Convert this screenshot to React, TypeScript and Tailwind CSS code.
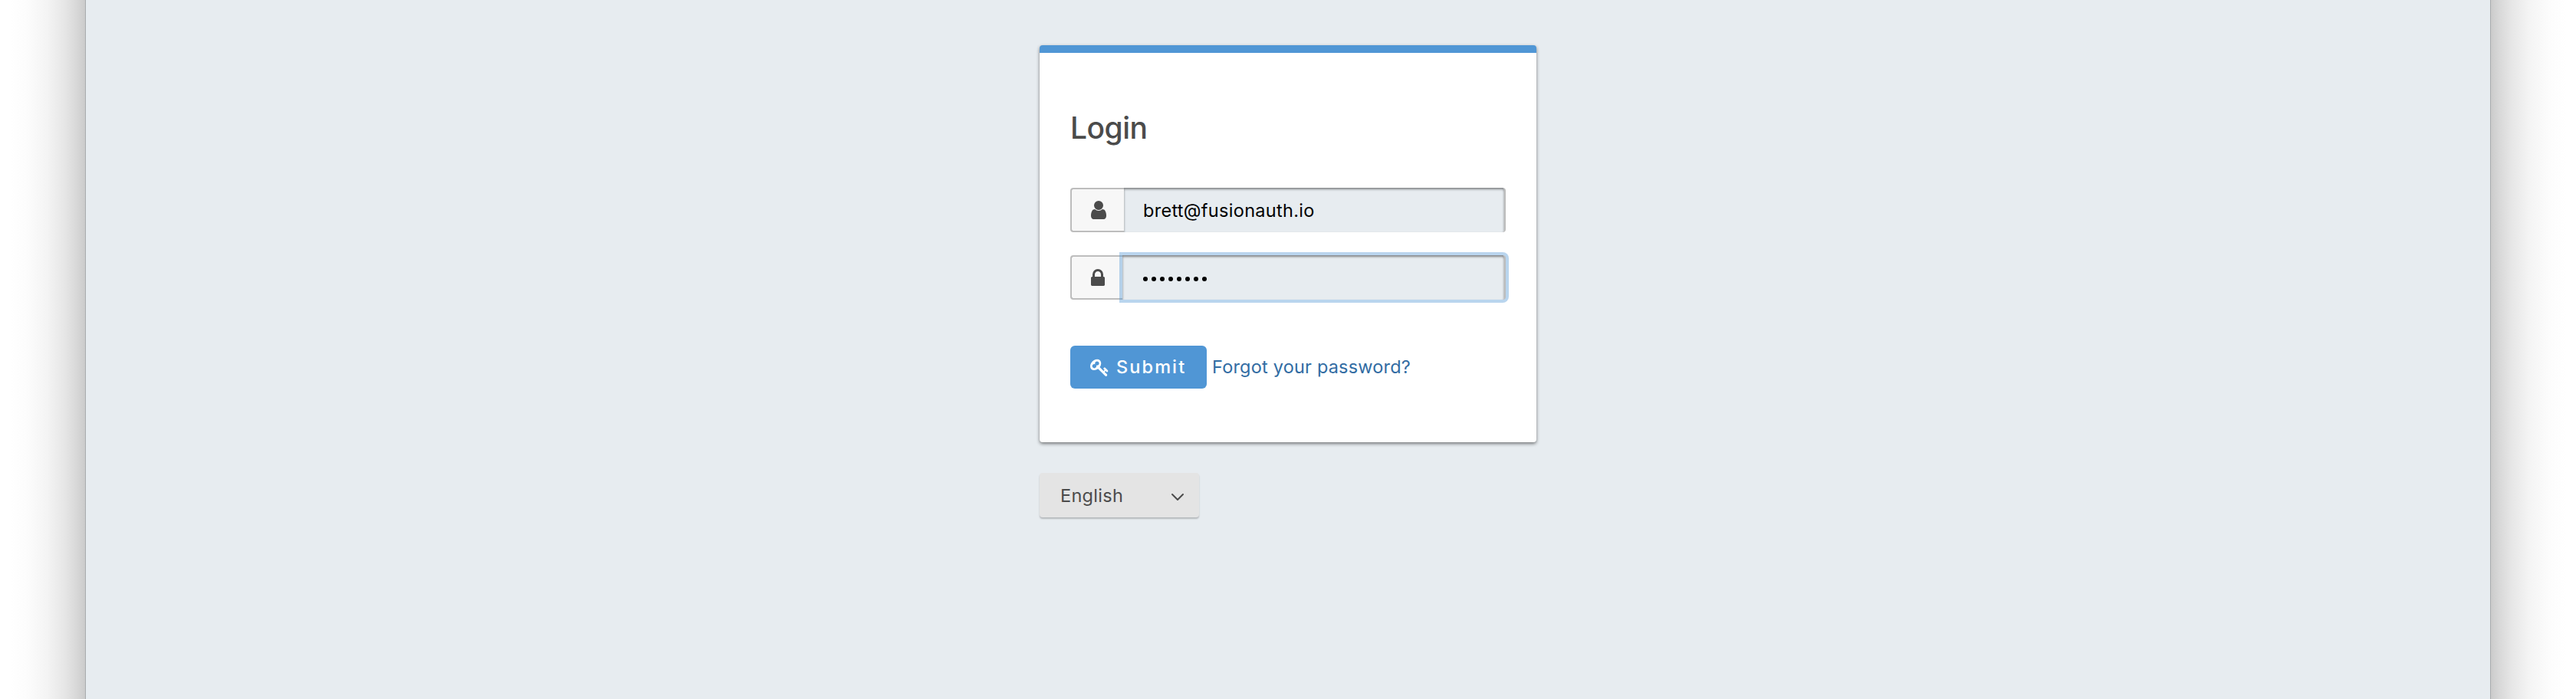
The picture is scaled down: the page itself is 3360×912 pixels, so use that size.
import type { ReactNode } from "react";

function UserIcon() {
  return (
    <svg viewBox="256 128 1280 1536" className="h-6 w-5 fill-current">
      <path d="M1536 1399q0 109-62.5 187t-150.5 78h-854q-88 0-150.5-78t-62.5-187q0-85 8.5-160.5t31.5-152 58.5-131 94-89 134.5-34.5q131 128 313 128t313-128q76 0 134.5 34.5t94 89 58.5 131 31.5 152 8.5 160.5zm-256-887q0 159-112.5 271.5t-271.5 112.5-271.5-112.5-112.5-271.5 112.5-271.5 271.5-112.5 271.5 112.5 112.5 271.5z" />
    </svg>
  );
}

function LockIcon() {
  return (
    <svg viewBox="320 128 1152 1408" className="h-[22px] w-[18px] fill-current">
      <path d="M640 768h512v-192q0-106-75-181t-181-75-181 75-75 181v192zm832 96v576q0 40-28 68t-68 28h-960q-40 0-68-28t-28-68v-576q0-40 28-68t68-28h32v-192q0-184 132-316t316-132 316 132 132 316v192h32q40 0 68 28t28 68z" />
    </svg>
  );
}

function KeyIcon() {
  return (
    <svg viewBox="0 0 1792 1792" className="size-[25px] shrink-0 fill-current">
      <path d="M832 512q0-80-56-136t-136-56-136 56-56 136q0 42 19 83-41-19-83-19-80 0-136 56t-56 136 56 136 136 56 136-56 56-136q0-42-19-83 41 19 83 19 80 0 136-56t56-136zm851 704q0 17-49 66t-66 49q-9 0-28.5-16t-36.5-33-38.5-40-24.5-26l-96 96 220 220q28 28 28 68 0 42-39 81t-81 39q-40 0-68-28l-671-671q-176 131-365 131-163 0-265.5-102.5t-102.5-265.5q0-160 95-313t248-248 313-95q163 0 265.5 102.5t102.5 265.5q0 189-131 365l355 355 96-96q-3-3-26-24.5t-40-38.5-33-36.5-16-28.5q0-17 49-66t66-49q13 0 23 10 6 6 46 44.5t82 79.5 86.5 86 73 78 28.5 41z" />
    </svg>
  );
}

function Addon({ children, className }: { children: ReactNode; className: string }) {
  return (
    <div
      className={`flex h-full shrink-0 items-center rounded-l-[4px] border-2 border-r-0 border-[#bdbdbd] bg-[#f7f7f7] pl-[25px] text-[#4b4b4b] ${className}`}
    >
      {children}
    </div>
  );
}

export default function App() {
  return (
    <div className="flex h-[912px] w-[3360px] overflow-hidden bg-white font-['Inter',sans-serif] text-[23.5px] leading-7">
      <div className="w-[111px] bg-[linear-gradient(to_right,#ffffff_12%,#fcfcfc_32%,#f4f4f4_55%,#e6e6e6_76%,#d8d8d8_90%,#cbcbcb_100%)]" />
      <main className="flex flex-1 flex-col items-center border-x border-[#a8abad] bg-[#e7ecf0] pt-[59px]">
        <div className="flex w-[648px] flex-col items-start">
          <section className="h-[518px] w-full rounded-[4px] border-t-[10px] border-[#5096d5] bg-white px-10 pt-[74px] shadow-[0_2px_4px_rgba(0,0,0,0.5)]">
            <h1 className="text-[39px] leading-[48px] font-medium tracking-[-0.5px] text-[#4b4b4b]">
              Login
            </h1>

            <div className="mt-[54px] flex h-[58px]">
              <Addon className="w-[70px]">
                <UserIcon />
              </Addon>
              <div className="flex flex-1 items-center rounded-r-[4px] border-r-2 border-[#bdbdbd] bg-[#e7ecf0] pt-px pl-[25px] tracking-[0.3px] text-black shadow-[inset_0_2px_3px_rgba(0,0,0,0.45)]">
                brett@fusionauth.io
              </div>
            </div>

            <div className="mt-[30px] flex h-[58px]">
              <Addon className="w-[68px]">
                <LockIcon />
              </Addon>
              <div className="flex flex-1 items-center gap-[5px] rounded-r-[4px] border-r-2 border-[#bdbdbd] bg-[#e7ecf0] pt-1 pl-[27px] shadow-[inset_0_2px_3px_rgba(0,0,0,0.45),0_0_0_4px_rgba(80,150,213,0.4)]">
                {Array.from({ length: 8 }, (_, i) => (
                  <span key={i} className="size-1.5 rounded-full bg-black" />
                ))}
              </div>
            </div>

            <div className="mt-[60px] flex h-14 items-center">
              <button className="flex h-14 w-[178px] items-center rounded-[6px] bg-[#5096d5] pl-[26px] font-medium tracking-[2.1px] text-white">
                <KeyIcon />
                <span className="ml-[9px]">Submit</span>
              </button>
              <a className="ml-[7px] tracking-[0.2px] text-[#316ca3]">Forgot your password?</a>
            </div>
          </section>

          <div className="mt-10 flex h-[58px] w-[208px] items-center justify-between rounded-[4px] bg-[#e4e4e4] pr-5 pl-[27px] shadow-[0_2px_2px_rgba(0,0,0,0.22)]">
            <span className="mt-px h-[27px] overflow-hidden leading-[27px] tracking-[0.3px] text-[#4b4b4b]">
              English
            </span>
            <svg viewBox="0 0 16 9" className="mt-1 h-[9px] w-4 overflow-visible">
              <path
                d="M1 1l7 7 7-7"
                fill="none"
                stroke="#4b4b4b"
                strokeWidth="2"
                strokeLinecap="round"
                strokeLinejoin="round"
              />
            </svg>
          </div>
        </div>
      </main>
      <div className="w-[111px] bg-[linear-gradient(to_left,#ffffff_12%,#fcfcfc_32%,#f4f4f4_55%,#e6e6e6_76%,#d8d8d8_90%,#cbcbcb_100%)]" />
    </div>
  );
}
